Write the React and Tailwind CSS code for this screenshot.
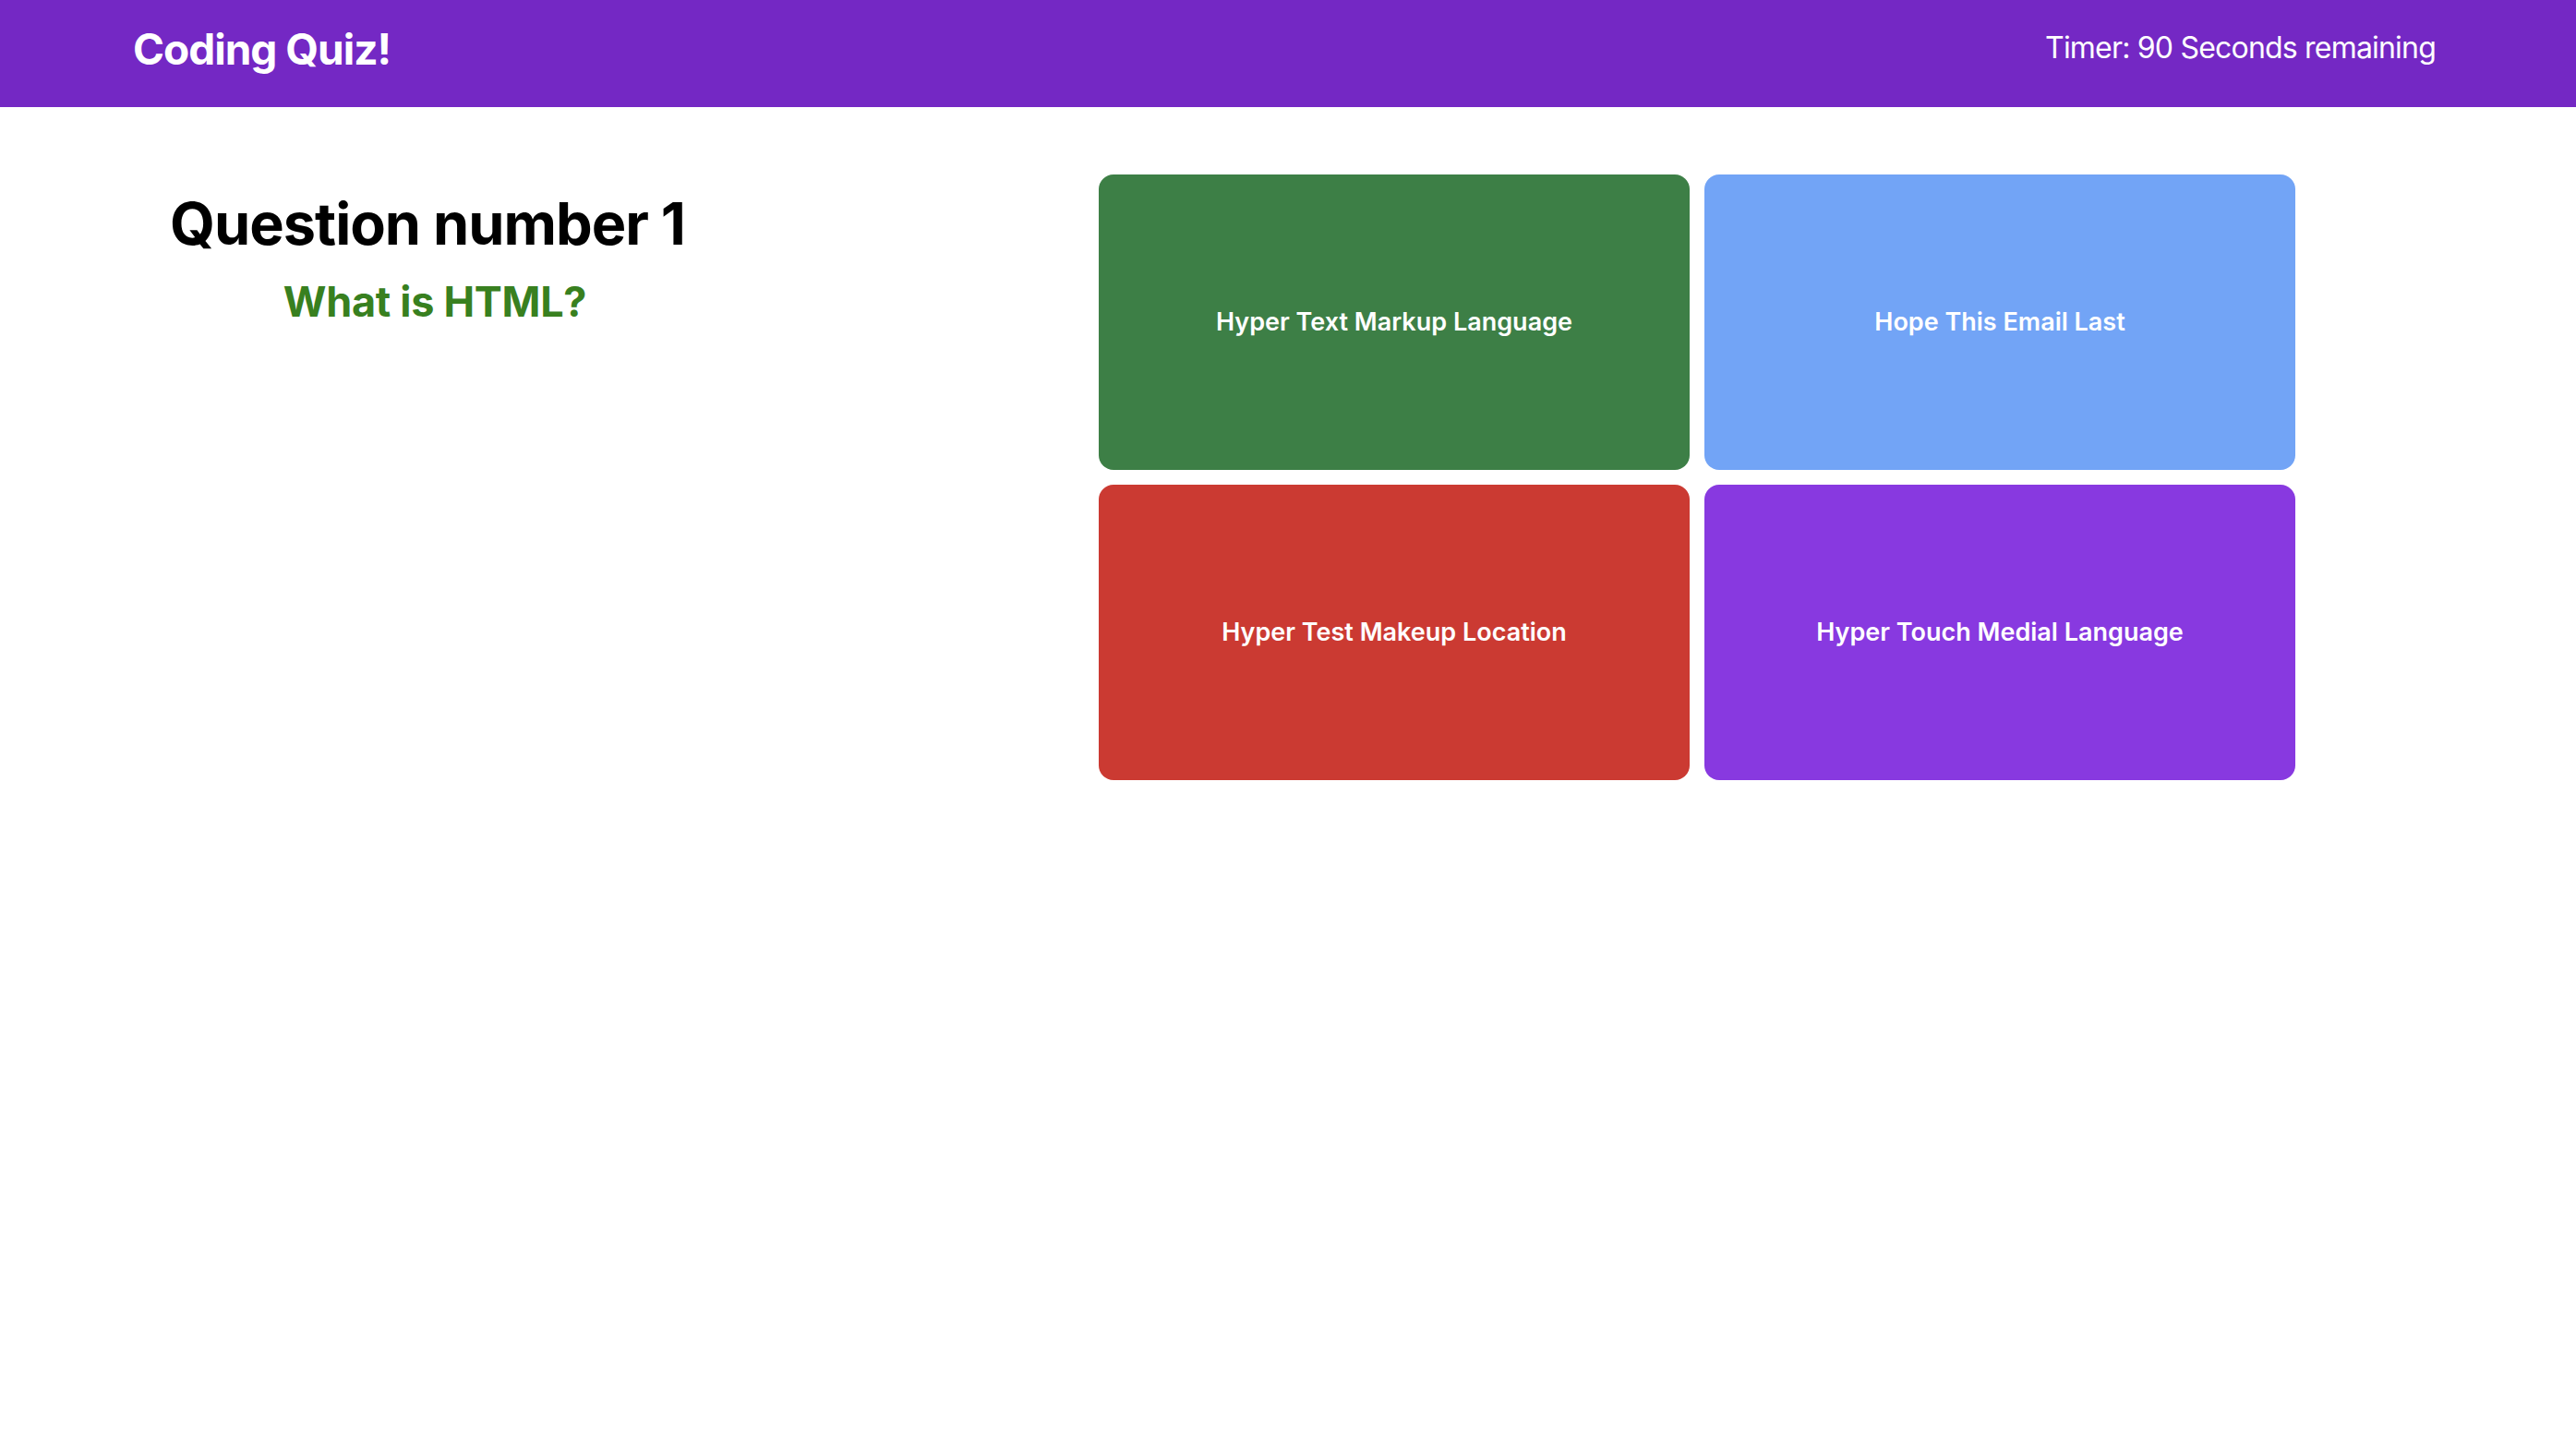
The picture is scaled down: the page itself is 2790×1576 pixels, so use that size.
import React from "react";

const answers = [
  { id: 1, text: "Hyper Text Markup Language", color: "bg-[#3d7f46]" },
  { id: 2, text: "Hope This Email Last", color: "bg-[#72a4f6]" },
  { id: 3, text: "Hyper Test Makeup Location", color: "bg-[#cb3a32]" },
  { id: 4, text: "Hyper Touch Medial Language", color: "bg-[#8839e0]" },
];

const App = () => {
  return (
    <div className="min-h-screen bg-white font-['Inter','Liberation_Sans',sans-serif]">
      <header className="h-[116px] bg-[#7428c4] flex items-center justify-between pl-[144px] pr-[152px] pb-[10px]">
        <h1 className="text-[46px] font-bold text-white tracking-[-1px]">
          Coding Quiz!
        </h1>
        <p className="text-[32px] text-white tracking-[-0.8px] mb-[2px]">
          Timer: 90 Seconds remaining
        </p>
      </header>

      <main className="flex pt-[73px]">
        <div className="w-[930px] flex flex-col items-center pt-[22px]">
          <h2 className="text-[63px] font-bold text-black leading-none tracking-[-1px] mr-[4px]">
            Question number 1
          </h2>
          <h3 className="mt-[30px] ml-[12px] text-[45px] font-bold text-[#38801f] leading-none tracking-[-0.3px]">
            What is HTML?
          </h3>
        </div>

        <div className="ml-[260px] grid grid-cols-2 gap-[16px]">
          {answers.map((answer) => (
            <button
              key={answer.id}
              className={`${answer.color} w-[640px] h-[320px] rounded-[16px] flex items-center justify-center text-white text-[27px] font-semibold`}
            >
              {answer.text}
            </button>
          ))}
        </div>
      </main>
    </div>
  );
};

export default App;
